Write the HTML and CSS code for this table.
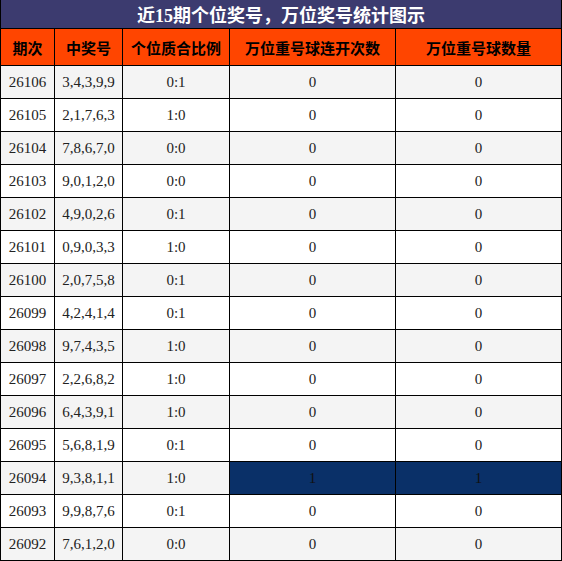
FILE: index.html
```html
<!DOCTYPE html>
<html lang="zh-CN">

<head>
    <meta charset="UTF-8">
    <meta name="viewport" content="width=device-width, initial-scale=1.0">
    <title>万位奖号统计</title>
    <link rel="stylesheet" href="styles.css">
</head>

<body>
    <table class="stats">
        <colgroup>
            <col class="c-issue">
            <col class="c-nums">
            <col class="c-ratio">
            <col class="c-streak">
            <col class="c-count">
        </colgroup>
        <thead>
            <tr class="title-row">
                <th colspan="5">近15期个位奖号，万位奖号统计图示</th>
            </tr>
            <tr class="head-row">
                <th>期次</th>
                <th>中奖号</th>
                <th>个位质合比例</th>
                <th>万位重号球连开次数</th>
                <th>万位重号球数量</th>
            </tr>
        </thead>
        <tbody>
            <tr><td>26106</td><td>3,4,3,9,9</td><td>0:1</td><td>0</td><td>0</td></tr>
            <tr><td>26105</td><td>2,1,7,6,3</td><td>1:0</td><td>0</td><td>0</td></tr>
            <tr><td>26104</td><td>7,8,6,7,0</td><td>0:0</td><td>0</td><td>0</td></tr>
            <tr><td>26103</td><td>9,0,1,2,0</td><td>0:0</td><td>0</td><td>0</td></tr>
            <tr><td>26102</td><td>4,9,0,2,6</td><td>0:1</td><td>0</td><td>0</td></tr>
            <tr><td>26101</td><td>0,9,0,3,3</td><td>1:0</td><td>0</td><td>0</td></tr>
            <tr><td>26100</td><td>2,0,7,5,8</td><td>0:1</td><td>0</td><td>0</td></tr>
            <tr><td>26099</td><td>4,2,4,1,4</td><td>0:1</td><td>0</td><td>0</td></tr>
            <tr><td>26098</td><td>9,7,4,3,5</td><td>1:0</td><td>0</td><td>0</td></tr>
            <tr><td>26097</td><td>2,2,6,8,2</td><td>1:0</td><td>0</td><td>0</td></tr>
            <tr><td>26096</td><td>6,4,3,9,1</td><td>1:0</td><td>0</td><td>0</td></tr>
            <tr><td>26095</td><td>5,6,8,1,9</td><td>0:1</td><td>0</td><td>0</td></tr>
            <tr><td>26094</td><td>9,3,8,1,1</td><td>1:0</td><td class="hit">1</td><td class="hit">1</td></tr>
            <tr><td>26093</td><td>9,9,8,7,6</td><td>0:1</td><td>0</td><td>0</td></tr>
            <tr><td>26092</td><td>7,6,1,2,0</td><td>0:0</td><td>0</td><td>0</td></tr>
        </tbody>
    </table>
</body>

</html>
```

FILE: styles.css
```css
body {
    margin: 0;
    padding: 0;
    background-color: #ffffff;
    font-family: "Liberation Serif", "Noto Sans CJK SC", serif;
}

.stats {
    width: 561px;
    border-collapse: collapse;
    table-layout: fixed;
}

.c-issue { width: 54px; }
.c-nums { width: 68px; }
.c-ratio { width: 107px; }
.c-streak { width: 166px; }
.c-count { width: 166px; }

.stats th,
.stats td {
    padding: 0;
    border: 1px solid #000;
    text-align: center;
    vertical-align: middle;
}

.title-row th {
    height: 28px;
    border-top: none;
    background-color: #3c3b6f;
    color: #ffffff;
    font-family: "Liberation Serif", "Noto Sans CJK SC", serif;
    font-size: 18px;
    font-weight: bold;
}

.head-row th {
    height: 36px;
    background-color: #ff4500;
    color: #000;
    font-family: "Noto Sans CJK SC", sans-serif;
    font-size: 15px;
    font-weight: bold;
}

.stats td {
    height: 32px;
    font-size: 15px;
    color: #222;
}

.stats tbody tr:nth-child(odd) td {
    background-color: #f4f4f4;
}

.stats tbody tr td.hit {
    background-color: #0a3068;
    color: #111;
}
```
